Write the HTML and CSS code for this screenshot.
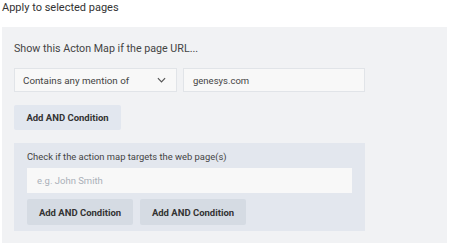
FILE: index.html
```html
<!DOCTYPE html>
<html lang="en">
<head>
    <meta charset="UTF-8">
    <title>Apply to selected pages</title>
    <link rel="stylesheet" href="styles.css">
</head>
<body>
    <div class="page-title">Apply to selected pages</div>
    <div class="panel">
        <div class="panel-label">Show this Acton Map if the page URL...</div>
        <div class="condition-row">
            <div class="select-box">
                <span>Contains any mention of</span>
                <svg viewBox="0 0 10 6" fill="none" stroke="currentColor" stroke-width="1.3">
                    <path d="M1 1l4 4 4-4"/>
                </svg>
            </div>
            <div class="text-input">genesys.com</div>
        </div>
        <button class="add-button">Add AND Condition</button>

        <div class="sub-panel">
            <div class="sub-label">Check if the action map targets the web page(s)</div>
            <div class="text-input sub-input placeholder">e.g. John Smith</div>
            <div class="button-row">
                <button class="add-button dark">Add AND Condition</button>
                <button class="add-button dark">Add AND Condition</button>
            </div>
        </div>
    </div>
</body>
</html>
```

FILE: styles.css
```css
body {
    margin: 0;
    padding: 0 0 0 2px;
    background: #fff;
    font-family: Roboto, "Liberation Sans", sans-serif;
    color: #333;
}

.page-title {
    height: 27px;
    line-height: 15px;
    font-size: 11px;
    color: #333;
}

.panel {
    width: 421px;
    padding: 12px;
    background: #f1f2f4;
}

.panel-label {
    line-height: 20px;
    font-size: 10.7px;
    color: #444;
    margin-bottom: 9px;
}

.condition-row {
    display: flex;
    gap: 6px;
}

.select-box {
    width: 145px;
    height: 22px;
    padding: 0 8px 0 8px;
    display: flex;
    align-items: center;
    justify-content: space-between;
    background: #f8f8f8;
    border: 1px solid #e1e4e8;
    font-size: 9.8px;
    color: #444;
}

.select-box svg {
    width: 9px;
    height: 6px;
    color: #555;
    margin-right: 2px;
}

.text-input {
    width: 171px;
    height: 22px;
    padding: 0 0 0 9px;
    display: flex;
    align-items: center;
    background: #f8f8f8;
    border: 1px solid #e1e4e8;
    font-size: 9.5px;
    color: #444;
}

.add-button {
    display: block;
    margin-top: 13px;
    width: 107px;
    height: 25px;
    padding: 0;
    border: none;
    border-radius: 2px;
    background: #e2e7ef;
    font-family: Roboto, "Liberation Sans", sans-serif;
    font-size: 9.5px;
    font-weight: bold;
    color: #333;
}

.sub-panel {
    margin-top: 13px;
    width: 325px;
    padding: 6px 13px 6px 13px;
    background: #e3e7ee;
}

.sub-label {
    line-height: 15px;
    font-size: 9.4px;
    color: #444;
    margin-bottom: 4px;
}

.sub-input {
    width: 315px;
    height: 25px;
    padding-left: 10px;
    border: none;
}

.placeholder {
    color: #aab0b8;
}

.button-row {
    display: flex;
    gap: 7px;
    margin-top: 6px;
}

.button-row .add-button {
    margin-top: 0;
    width: 106px;
    height: 26px;
}

.add-button.dark {
    background: #d5dbe3;
}
```
